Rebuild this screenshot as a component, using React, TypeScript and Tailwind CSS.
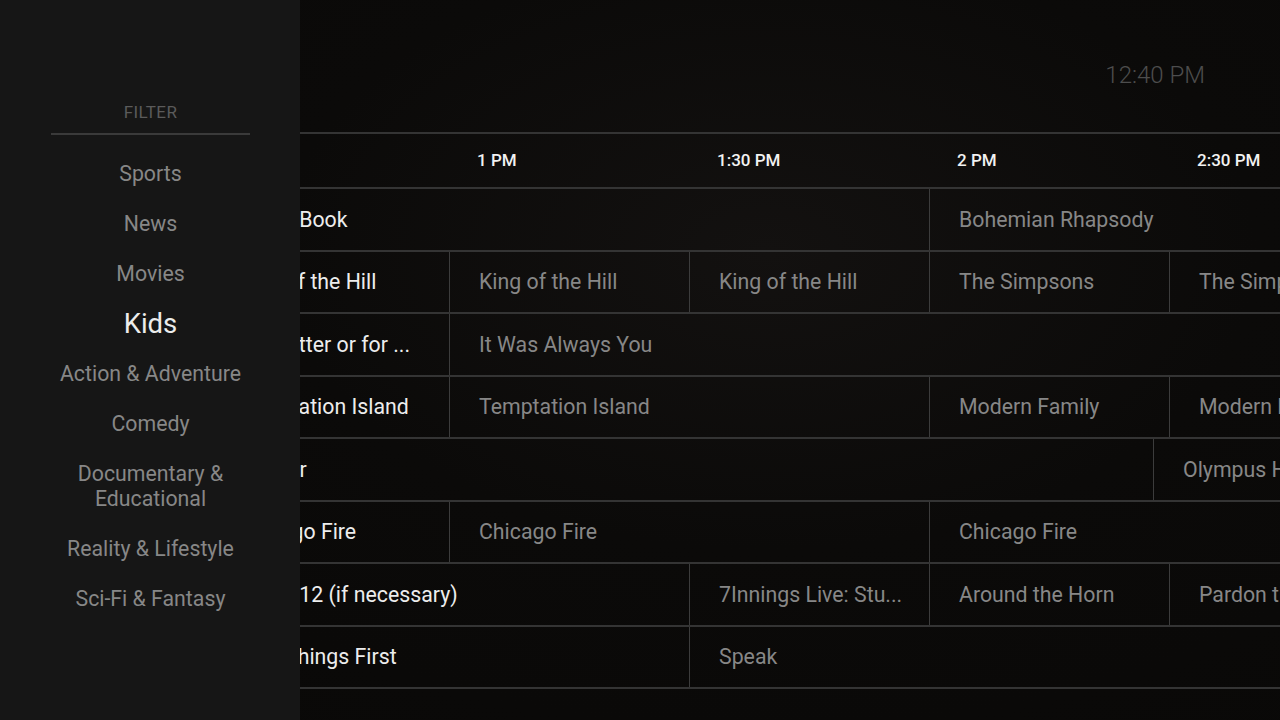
import React from 'react';

type Program = { title: string; mins: number; live?: boolean };

const MIN_PX = 8;

const filters = [
  'Sports',
  'News',
  'Movies',
  'Kids',
  'Action & Adventure',
  'Comedy',
  'Documentary & Educational',
  'Reality & Lifestyle',
  'Sci-Fi & Fantasy',
];

const times = ['1 PM', '1:30 PM', '2 PM', '2:30 PM'];

const rows: Program[][] = [
  [
    { title: 'Green Book', mins: 90, live: true },
    { title: 'Bohemian Rhapsody', mins: 120 },
  ],
  [
    { title: 'King of the Hill', mins: 30, live: true },
    { title: 'King of the Hill', mins: 30 },
    { title: 'King of the Hill', mins: 30 },
    { title: 'The Simpsons', mins: 30 },
    { title: 'The Simpsons', mins: 30 },
  ],
  [
    { title: 'For Better or for ...', mins: 30, live: true },
    { title: 'It Was Always You', mins: 120 },
  ],
  [
    { title: 'Temptation Island', mins: 30, live: true },
    { title: 'Temptation Island', mins: 60 },
    { title: 'Modern Family', mins: 30 },
    { title: 'Modern Family', mins: 30 },
  ],
  [
    { title: 'Hitcher', mins: 118, live: true },
    { title: 'Olympus Has Fallen', mins: 120 },
  ],
  [
    { title: 'Chicago Fire', mins: 30, live: true },
    { title: 'Chicago Fire', mins: 60 },
    { title: 'Chicago Fire', mins: 60 },
  ],
  [
    { title: 'Game 12 (if necessary)', mins: 60, live: true },
    { title: '7Innings Live: Stu...', mins: 30 },
    { title: 'Around the Horn', mins: 30 },
    { title: 'Pardon the Interruption', mins: 30 },
  ],
  [
    { title: 'First Things First', mins: 60, live: true },
    { title: 'Speak', mins: 120 },
  ],
];

const Sidebar: React.FC = () => (
  <aside className="absolute inset-y-0 left-0 w-[300px] bg-[#161616] pl-[51px] pr-[50px] pt-[100px]">
    <div className="border-b-2 border-[#3a3a3a] pb-[9px] text-center text-[17px] leading-6 tracking-wide text-[#5b5b5b]">
      FILTER
    </div>
    <ul className="mt-[26px] flex flex-col gap-[25px] text-center">
      {filters.map((f) => (
        <li
          key={f}
          className={
            f === 'Kids'
              ? 'text-[27.5px] leading-[25px] text-[#ececec]'
              : 'px-2 text-[21.3px] leading-[25px] text-[#878787]'
          }
        >
          {f}
        </li>
      ))}
    </ul>
  </aside>
);

const App: React.FC = () => {
  return (
    <div
      className="relative h-[720px] w-[1280px] overflow-hidden bg-[#0b0a09] bg-[radial-gradient(ellipse_at_60%_35%,#131110_0%,#0b0a09_45%,#090807_100%)] text-white"
      style={{ fontFamily: 'Roboto, "Noto Sans", sans-serif' }}
    >
      {/* clock */}
      <div className="flex h-[132px] justify-end pr-[75px] pt-[59px]">
        <span className="text-[24px] font-light leading-8 text-[#4d4d4d]">12:40 PM</span>
      </div>

      {/* guide */}
      <div className="border-t-2 border-[#343434]">
        <div className="flex h-[55px] items-center border-b-2 border-[#343434]">
          <div className="w-[449px] shrink-0" />
          {times.map((t) => (
            <div key={t} className="w-[240px] shrink-0 pl-[28px] text-[17px] font-medium text-[#f2f2f2]">
              {t}
            </div>
          ))}
        </div>

        {rows.map((row, i) => (
          <div key={i} className="flex h-[62.5px] overflow-hidden border-b-2 border-[#343434]">
            <div className="w-[209px] shrink-0" />
            {row.map((p, j) => (
              <div
                key={j}
                className={`flex shrink-0 items-center overflow-hidden pl-[29px] pt-px text-[21.3px] ${
                  j > 0 ? 'border-l border-[#3c3c3c]' : ''
                } ${p.live ? 'text-[#ededed]' : 'text-[#878787]'}`}
                style={{ width: p.mins * MIN_PX }}
              >
                <span className="whitespace-nowrap">{p.title}</span>
              </div>
            ))}
          </div>
        ))}
      </div>

      <Sidebar />
    </div>
  );
};

export default App;
